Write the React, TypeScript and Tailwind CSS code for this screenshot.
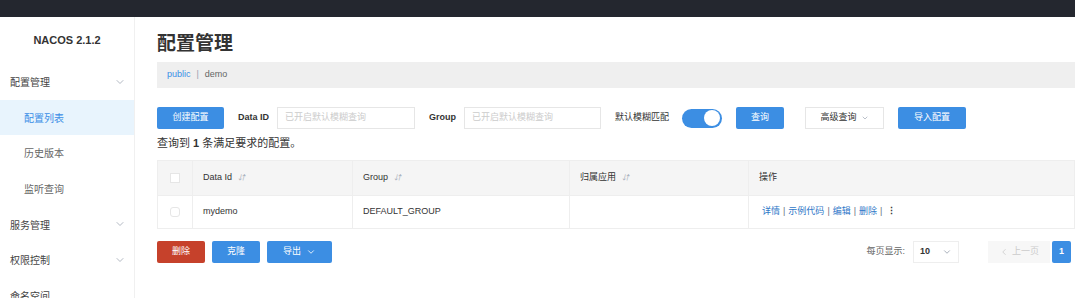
import { ChevronDown, ChevronLeft } from 'lucide-react';

const font = { fontFamily: '"Helvetica Neue", "Liberation Sans", "Noto Sans CJK SC", sans-serif' };

const menu = [
  { label: '配置管理', chevron: true },
  { label: '配置列表', sub: true, active: true },
  { label: '历史版本', sub: true },
  { label: '监听查询', sub: true },
  { label: '服务管理', chevron: true },
  { label: '权限控制', chevron: true },
  { label: '命名空间' },
];

function SortIcon() {
  return <span className="ml-1.5 text-[7px] text-gray-400 italic">⇵</span>;
}

export default function App() {
  return (
    <div className="w-[1080px] h-[298px] overflow-hidden bg-white text-[#333]" style={font}>
      <div className="h-[17px] bg-[#24272f] w-[1075px]" />
      <div className="flex">
        <aside className="w-[135px] shrink-0 border-r border-[#f0f0f0] h-[281px]">
          <div className="h-[47px] flex items-center justify-center text-[11px] font-bold text-[#333]">NACOS 2.1.2</div>
          {menu.map((m) => (
            <div
              key={m.label}
              className={`h-[35.6px] flex items-center justify-between text-[10px] pr-2 ${m.sub ? 'pl-6' : 'pl-2.5'} ${m.active ? 'bg-[#e8f4fd] text-[#3a8ee6]' : m.sub ? 'text-[#666]' : 'text-[#444]'}`}
            >
              <span className="mt-[2px]">{m.label}</span>
              {m.chevron && <ChevronDown className="w-3 h-3 text-gray-400" strokeWidth={1.5} />}
            </div>
          ))}
        </aside>
        <main className="flex-1 pl-[22px] pr-[5px] flex flex-col">
          <h1 className="text-[19px] font-bold mt-[14px] leading-[26px] text-[#333]">配置管理</h1>
          <div className="mt-[5px] h-[26px] bg-[#efefef] flex items-center px-[10px] text-[9px] text-[#666]">
            <span className="text-[#3a8ee6]">public</span>
            <span className="mx-[6px] text-gray-400">|</span>
            <span>demo</span>
          </div>
          <div className="mt-[19px] h-[22px] flex items-center text-[9px]">
            <button className="w-[67px] h-[22px] bg-[#3c8ee3] text-white rounded-[2px]">创建配置</button>
            <span className="ml-[14px] font-bold">Data ID</span>
            <div className="ml-[8px] w-[138px] h-[22px] border border-[#e6e6e6] flex items-center px-[7px] text-[#ccc]">已开启默认模糊查询</div>
            <span className="ml-[14px] font-bold">Group</span>
            <div className="ml-[8px] w-[137px] h-[22px] border border-[#e6e6e6] flex items-center px-[7px] text-[#ccc]">已开启默认模糊查询</div>
            <span className="ml-[14px]">默认模糊匹配</span>
            <div className="ml-[13px] w-[40px] h-[19px] rounded-full bg-[#3c8ee3] flex items-center justify-end pr-[2px]">
              <div className="w-[16px] h-[16px] rounded-full bg-white" />
            </div>
            <button className="ml-[14px] w-[48px] h-[22px] bg-[#3c8ee3] text-white rounded-[2px]">查询</button>
            <button className="ml-[21px] w-[79px] h-[22px] border border-[#e6e6e6] text-[#333] flex items-center justify-center gap-1">
              高级查询 <ChevronDown className="w-2 h-2 text-gray-400" />
            </button>
            <button className="ml-[14px] w-[68px] h-[22px] bg-[#3c8ee3] text-white rounded-[2px]">导入配置</button>
          </div>
          <div className="mt-[7px] text-[11px] text-[#333] leading-[14px]">
            查询到 <b>1</b> 条满足要求的配置。
          </div>
          <div className="mt-[10px] border border-[#eee] text-[9px]">
            <div className="grid grid-cols-[35px_160px_217px_179px_1fr] h-[34px] bg-[#f5f5f5]">
              <div className="flex items-center justify-center border-r border-[#eee]">
                <div className="w-[10px] h-[10px] bg-white border border-[#e6e6e6]" />
              </div>
              <div className="flex items-center px-[10px] border-r border-[#eee]">Data Id<SortIcon /></div>
              <div className="flex items-center px-[10px] border-r border-[#eee]">Group<SortIcon /></div>
              <div className="flex items-center px-[10px] border-r border-[#eee]">归属应用<SortIcon /></div>
              <div className="flex items-center px-[10px]">操作</div>
            </div>
            <div className="grid grid-cols-[35px_160px_217px_179px_1fr] h-[33px] border-t border-[#eee]">
              <div className="flex items-center justify-center border-r border-[#eee]">
                <div className="w-[10px] h-[10px] rounded-[3px] border border-[#e6e6e6]" />
              </div>
              <div className="flex items-center px-[10px] border-r border-[#eee]">mydemo</div>
              <div className="flex items-center px-[10px] border-r border-[#eee]">DEFAULT_GROUP</div>
              <div className="flex items-center px-[10px] border-r border-[#eee]" />
              <div className="flex items-center px-[13px] text-[#2f78c8] gap-[3px]">
                <span>详情</span><span className="text-gray-500">|</span>
                <span>示例代码</span><span className="text-gray-500">|</span>
                <span>编辑</span><span className="text-gray-500">|</span>
                <span>删除</span><span className="text-gray-500">|</span>
                <span className="text-[#333] font-bold ml-[2px]">⋮</span>
              </div>
            </div>
          </div>
          <div className="mt-[12px] h-[22px] flex items-center text-[9px]">
            <button className="w-[48px] h-[22px] bg-[#c6412b] text-white rounded-[2px]">删除</button>
            <button className="ml-[7px] w-[48px] h-[22px] bg-[#3c8ee3] text-white rounded-[2px]">克隆</button>
            <button className="ml-[7px] w-[65px] h-[22px] bg-[#3c8ee3] text-white rounded-[2px] flex items-center justify-center gap-[5px]">
              导出 <ChevronDown className="w-2.5 h-2.5" />
            </button>
            <div className="flex-1" />
            <span className="text-[#666]">每页显示:</span>
            <div className="ml-[8px] w-[46px] h-[22px] border border-[#eee] flex items-center justify-between px-[6px] font-bold">
              10 <ChevronDown className="w-2.5 h-2.5 text-gray-400 font-normal" />
            </div>
            <div className="ml-[29px] w-[62px] h-[22px] bg-[#f7f7f7] flex items-center justify-center gap-[3px] text-[#ccc]">
              <ChevronLeft className="w-2.5 h-2.5" /> 上一页
            </div>
            <div className="ml-[2px] mr-[4px] w-[19px] h-[22px] bg-[#3c8ee3] text-white flex items-center justify-center rounded-[2px] font-bold">1</div>
          </div>
        </main>
      </div>
    </div>
  );
}
